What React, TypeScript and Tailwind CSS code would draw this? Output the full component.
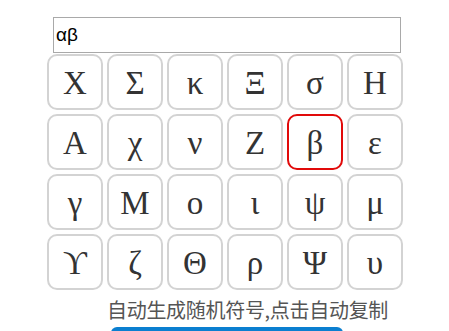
import { useEffect, useRef } from "react";

const symbols = [
  "Χ", "Σ", "κ", "Ξ", "σ", "Η",
  "Α", "χ", "ν", "Ζ", "β", "ε",
  "γ", "Μ", "ο", "ι", "ψ", "μ",
  "ϒ", "ζ", "Θ", "ρ", "Ψ", "υ",
];

export default function App() {
  const inputRef = useRef<HTMLInputElement>(null);

  useEffect(() => {
    const el = inputRef.current;
    if (el) {
      el.focus();
      el.setSelectionRange(el.value.length, el.value.length);
    }
  }, []);

  return (
    <div className="w-[449px] h-[331px] overflow-hidden bg-white font-['Liberation_Sans',sans-serif]">
      <input
        ref={inputRef}
        defaultValue="αβ"
        className="block ml-[53px] mt-[17px] w-[348px] h-[36px] border border-[#a9a9a9] px-[2px] text-[19px] text-black outline-none caret-black"
      />

      <div className="ml-[47px] mt-[1px] grid grid-cols-[repeat(6,56px)] gap-[4px]">
        {symbols.map((s, i) => (
          <button
            key={i}
            className={`w-[56px] h-[56px] rounded-[10px] border-2 bg-white flex items-center justify-center pt-[2px] text-[33px] leading-none text-[#333] font-['Liberation_Serif',serif] ${
              s === "β" ? "border-[#e10a0a]" : "border-[#d3d3d3]"
            }`}
          >
            {s}
          </button>
        ))}
      </div>

      <p className="ml-[107px] mt-[7px] text-[20px] leading-[26px] tracking-[-0.3px] text-[#555] font-['Noto_Sans_CJK_SC',sans-serif]">
        自动生成随机符号,点击自动复制
      </p>

      <div className="ml-[111px] mt-[4px] w-[232px] h-[30px] rounded-[6px] bg-[#0b7fd0]" />
    </div>
  );
}
